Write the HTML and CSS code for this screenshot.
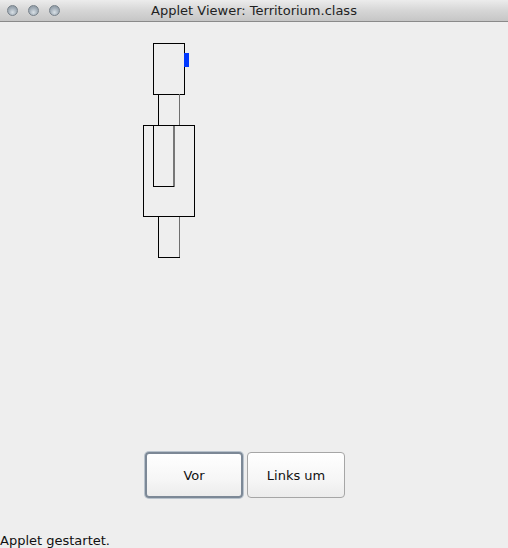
FILE: index.html
```html
<!DOCTYPE html>
<html>
<head>
<meta charset="utf-8">
<link rel="stylesheet" href="styles.css">
</head>
<body>
<div class="window">
  <div class="titlebar">
    <div class="lights">
      <span class="light"></span><span class="light"></span><span class="light"></span>
    </div>
    <div class="title">Applet Viewer: Territorium.class</div>
  </div>
  <div class="canvas">
    <svg class="drawing" width="508" height="426" viewBox="0 22 508 426">
      <g fill="none" stroke="#000" stroke-width="1">
        <rect x="153.5" y="43.5" width="31" height="51"/>
        <line x1="158.5" y1="94" x2="158.5" y2="125"/>
        <line x1="179.5" y1="94" x2="179.5" y2="125" stroke="#6e6e6e"/>
        <rect x="143.5" y="125.5" width="51" height="91"/>
        <rect x="153.5" y="125.5" width="20.5" height="61"/>
        <line x1="158.5" y1="217" x2="158.5" y2="257.5"/>
        <line x1="179.5" y1="217" x2="179.5" y2="257.5" stroke="#6e6e6e"/>
        <line x1="158" y1="257.5" x2="180" y2="257.5"/>
      </g>
      <rect x="184" y="53" width="5" height="14" fill="#0038ff"/>
    </svg>
  </div>
  <div class="buttons">
    <button class="btn focused">Vor</button>
    <button class="btn">Links um</button>
  </div>
  <div class="status">Applet gestartet.</div>
</div>
</body>
</html>
```
FILE: styles.css
```css
html, body {
  margin: 0;
  padding: 0;
  background: #eeeeee;
}
.window {
  width: 508px;
  height: 548px;
  display: flex;
  flex-direction: column;
  overflow: hidden;
  font-family: "DejaVu Sans", "Liberation Sans", sans-serif;
}
.titlebar {
  height: 21px;
  border-bottom: 1px solid #8a8a8a;
  background: linear-gradient(#ececec, #d6d6d6 50%, #c6c6c6);
  display: flex;
  align-items: center;
  position: relative;
}
.lights {
  display: flex;
  gap: 10px;
  padding-left: 7px;
}
.light {
  width: 11px;
  height: 11px;
  border-radius: 50%;
  box-sizing: border-box;
  border: 1px solid #77818a;
  background: radial-gradient(circle at 50% 70%, #d8e0e6 0%, #a2adb7 55%, #84909a 100%);
}
.title {
  position: absolute;
  left: 0;
  right: 0;
  top: 0;
  line-height: 22px;
  text-align: center;
  font-size: 13px;
  color: #222;
}
.canvas {
  height: 426px;
}
.drawing {
  display: block;
}
.buttons {
  display: flex;
  gap: 4px;
  padding-left: 145px;
  padding-top: 4px;
  height: 46px;
}
.btn {
  width: 98px;
  height: 46px;
  box-sizing: border-box;
  border: 1px solid #a6a6a6;
  border-radius: 4px;
  background: linear-gradient(#ffffff, #f6f6f6 60%, #ececec);
  font-family: "DejaVu Sans", "Liberation Sans", sans-serif;
  font-size: 13px;
  color: #111;
  padding: 0;
}
.btn.focused {
  border: 2px solid #7c8896;
  box-shadow: 0 0 0 1px #b8c2cc;
}
.status {
  margin-top: auto;
  font-size: 13px;
  color: #111;
  line-height: 15px;
}
```
